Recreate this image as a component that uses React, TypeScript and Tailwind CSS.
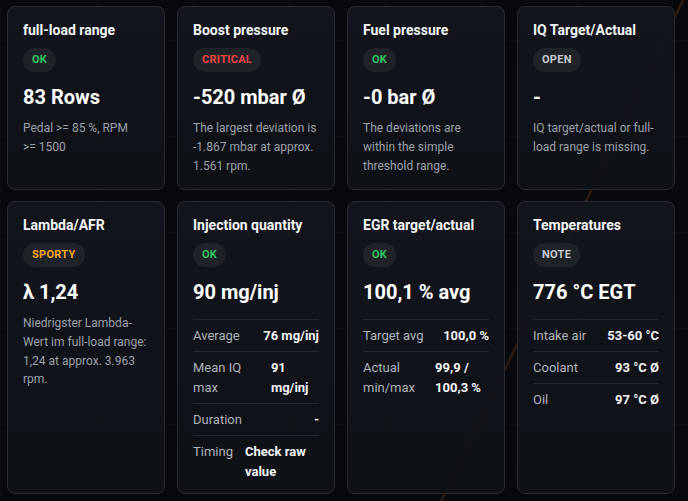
import type { ReactNode } from "react"

type Tone = "ok" | "critical" | "sporty" | "neutral"

interface Row {
  label: string
  value: string
}

interface Metric {
  title: string
  status: string
  tone: Tone
  value: string
  note?: string
  rows?: Row[]
}

const toneText: Record<Tone, string> = {
  ok: "text-[#2fc464]",
  critical: "text-[#f04545]",
  sporty: "text-[#f4a623]",
  neutral: "text-[#c6c9ce]",
}

const metrics: Metric[] = [
  {
    title: "full-load range",
    status: "OK",
    tone: "ok",
    value: "83 Rows",
    // keep the threshold together with its operator
    note: "Pedal >= 85 %, RPM >=\u00a01500",
  },
  {
    title: "Boost pressure",
    status: "CRITICAL",
    tone: "critical",
    value: "-520 mbar Ø",
    note: "The largest deviation is -1.867 mbar at approx. 1.561 rpm.",
  },
  {
    title: "Fuel pressure",
    status: "OK",
    tone: "ok",
    value: "-0 bar Ø",
    note: "The deviations are within the simple threshold range.",
  },
  {
    title: "IQ Target/Actual",
    status: "OPEN",
    tone: "neutral",
    value: "-",
    note: "IQ target/actual or full-load range is missing.",
  },
  {
    title: "Lambda/AFR",
    status: "SPORTY",
    tone: "sporty",
    value: "λ 1,24",
    note: "Niedrigster Lambda-Wert im full-load range: 1,24 at approx. 3.963 rpm.",
  },
  {
    title: "Injection quantity",
    status: "OK",
    tone: "ok",
    value: "90 mg/inj",
    rows: [
      { label: "Average", value: "76 mg/inj" },
      { label: "Mean IQ max", value: "91 mg/inj" },
      { label: "Duration", value: "-" },
      { label: "Timing", value: "Check raw value" },
    ],
  },
  {
    title: "EGR target/actual",
    status: "OK",
    tone: "ok",
    value: "100,1 % avg",
    rows: [
      { label: "Target avg", value: "100,0 %" },
      { label: "Actual min/max", value: "99,9 / 100,3 %" },
    ],
  },
  {
    title: "Temperatures",
    status: "NOTE",
    tone: "neutral",
    value: "776 °C EGT",
    rows: [
      { label: "Intake air", value: "53-60 °C" },
      { label: "Coolant", value: "93 °C Ø" },
      { label: "Oil", value: "97 °C Ø" },
    ],
  },
]

function StatusPill({ tone, children }: { tone: Tone; children: ReactNode }) {
  return (
    <span
      className={`inline-flex h-6 items-center rounded-full bg-[#1f2328] px-[9px] text-[11px] font-bold tracking-wide ${toneText[tone]}`}
    >
      {children}
    </span>
  )
}

function MetricCard({ title, status, tone, value, note, rows }: Metric) {
  return (
    <div className="flex flex-col overflow-hidden rounded-lg border border-[#272b31] bg-linear-to-b from-[#12161c]/95 to-[#0e1116]/95 px-[15px] pt-[13px]">
      <h3 className="text-[14px] leading-5 font-bold text-[#f4f5f7]">{title}</h3>

      <div className="mt-1.5">
        <StatusPill tone={tone}>{status}</StatusPill>
      </div>

      <p className="mt-[11px] text-[20px] leading-7 font-bold text-white">{value}</p>

      {note && (
        <p className="mt-2 text-[12px] leading-[18.7px] text-[#9ca1a9]">{note}</p>
      )}

      {/* key/value breakdown */}
      {rows && (
        <div className="mt-[13px] divide-y divide-[#22262c] border-t border-[#22262c]">
          {rows.map((row) => (
            <div
              key={row.label}
              className="flex justify-between gap-3 py-[5.5px] text-[13px] leading-5"
            >
              <span className="text-[#aeb3ba]">{row.label}</span>
              <span className="font-bold text-[#f4f5f7]">{row.value}</span>
            </div>
          ))}
        </div>
      )}
    </div>
  )
}

export default function App() {
  return (
    <div
      className="relative h-[501px] w-[688px] overflow-hidden bg-[#07090c]"
      style={{ fontFamily: "Roboto, 'Liberation Sans', sans-serif" }}
    >
      {/* backdrop: faint grid and a warm diagonal streak */}
      <div className="pointer-events-none absolute inset-0 bg-[linear-gradient(rgba(255,255,255,0.018)_1px,transparent_1px),linear-gradient(90deg,rgba(255,255,255,0.018)_1px,transparent_1px)] bg-size-[96px_96px] bg-position-[0_40px]" />
      <svg className="pointer-events-none absolute inset-0" width="688" height="501">
        <line x1="686" y1="-6" x2="438" y2="508" stroke="rgba(234,120,40,0.16)" strokeWidth="2.5" />
      </svg>

      <div className="relative grid grid-cols-[repeat(4,158px)] grid-rows-[184px_293px] gap-x-3 gap-y-[11px] pt-[6px] pl-[7px]">
        {metrics.map((m) => (
          <MetricCard key={m.title} {...m} />
        ))}
      </div>
    </div>
  )
}
